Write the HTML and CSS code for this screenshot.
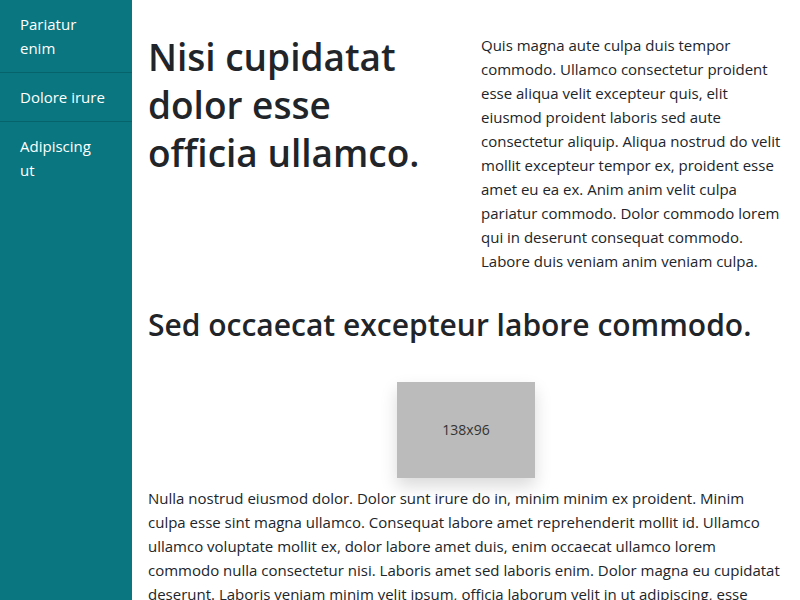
FILE: index.html
```html
<!DOCTYPE html>
<html lang="en">
<head>
<meta charset="utf-8">
<title>Page</title>
<link rel="stylesheet" href="styles.css">
</head>
<body>
<div class="layout">
  <nav class="sidebar">
    <a class="nav-item" href="#">Pariatur enim</a>
    <a class="nav-item" href="#">Dolore irure</a>
    <a class="nav-item" href="#">Adipiscing ut</a>
  </nav>
  <main class="main">
    <div class="intro">
      <h1 class="title">Nisi cupidatat dolor esse officia ullamco.</h1>
      <p class="lead">Quis magna aute culpa duis tempor commodo. Ullamco consectetur proident esse aliqua velit excepteur quis, elit eiusmod proident laboris sed aute consectetur aliquip. Aliqua nostrud do velit mollit excepteur tempor ex, proident esse amet eu ea ex. Anim anim velit culpa pariatur commodo. Dolor commodo lorem qui in deserunt consequat commodo. Labore duis veniam anim veniam culpa.</p>
    </div>
    <h2 class="subtitle">Sed occaecat excepteur labore commodo.</h2>
    <div class="figure"><div class="placeholder">138x96</div></div>
    <p class="body-text">Nulla nostrud eiusmod dolor. Dolor sunt irure do in, minim minim ex proident. Minim culpa esse sint magna ullamco. Consequat labore amet reprehenderit mollit id. Ullamco ullamco voluptate mollit ex, dolor labore amet duis, enim occaecat ullamco lorem commodo nulla consectetur nisi. Laboris amet sed laboris enim. Dolor magna eu cupidatat deserunt. Laboris veniam minim velit ipsum, officia laborum velit in ut adipiscing, esse amet.</p>
  </main>
</div>
</body>
</html>
```
FILE: styles.css
```css
* { box-sizing: border-box; }
html, body { margin: 0; padding: 0; }
body {
  font-family: "Open Sans", "Noto Sans", sans-serif;
  font-size: 15px;
  line-height: 24px;
  color: #212529;
  background: #fff;
}
.layout {
  display: flex;
  min-height: 600px;
}
.sidebar {
  width: 132px;
  flex: 0 0 132px;
  background: #0a7680;
  display: flex;
  flex-direction: column;
}
.nav-item {
  display: block;
  padding: 12px 26px 12px 20px;
  color: #fff;
  text-decoration: none;
  border-bottom: 1px solid #07636b;
}
.nav-item:last-child { border-bottom: none; }
.main {
  flex: 1;
  padding: 33px 16px 0 16px;
  min-width: 0;
}
.intro {
  display: grid;
  grid-template-columns: 1fr 1fr;
  column-gap: 30px;
}
.title {
  margin: 0;
  max-width: 288px;
  font-size: 37px;
  line-height: 48px;
  font-weight: 600;
}
.lead { margin: 0; }
.subtitle {
  margin: 33px 0 38px;
  font-size: 30px;
  line-height: 38px;
  font-weight: 600;
}
.figure {
  display: flex;
  justify-content: center;
}
.placeholder {
  width: 138px;
  height: 96px;
  background: #bbbbbb;
  color: #333;
  font-size: 14px;
  display: flex;
  align-items: center;
  justify-content: center;
  box-shadow: 0 8px 16px rgba(0,0,0,0.15);
}
.body-text { margin: 8px 0 0; }
```
